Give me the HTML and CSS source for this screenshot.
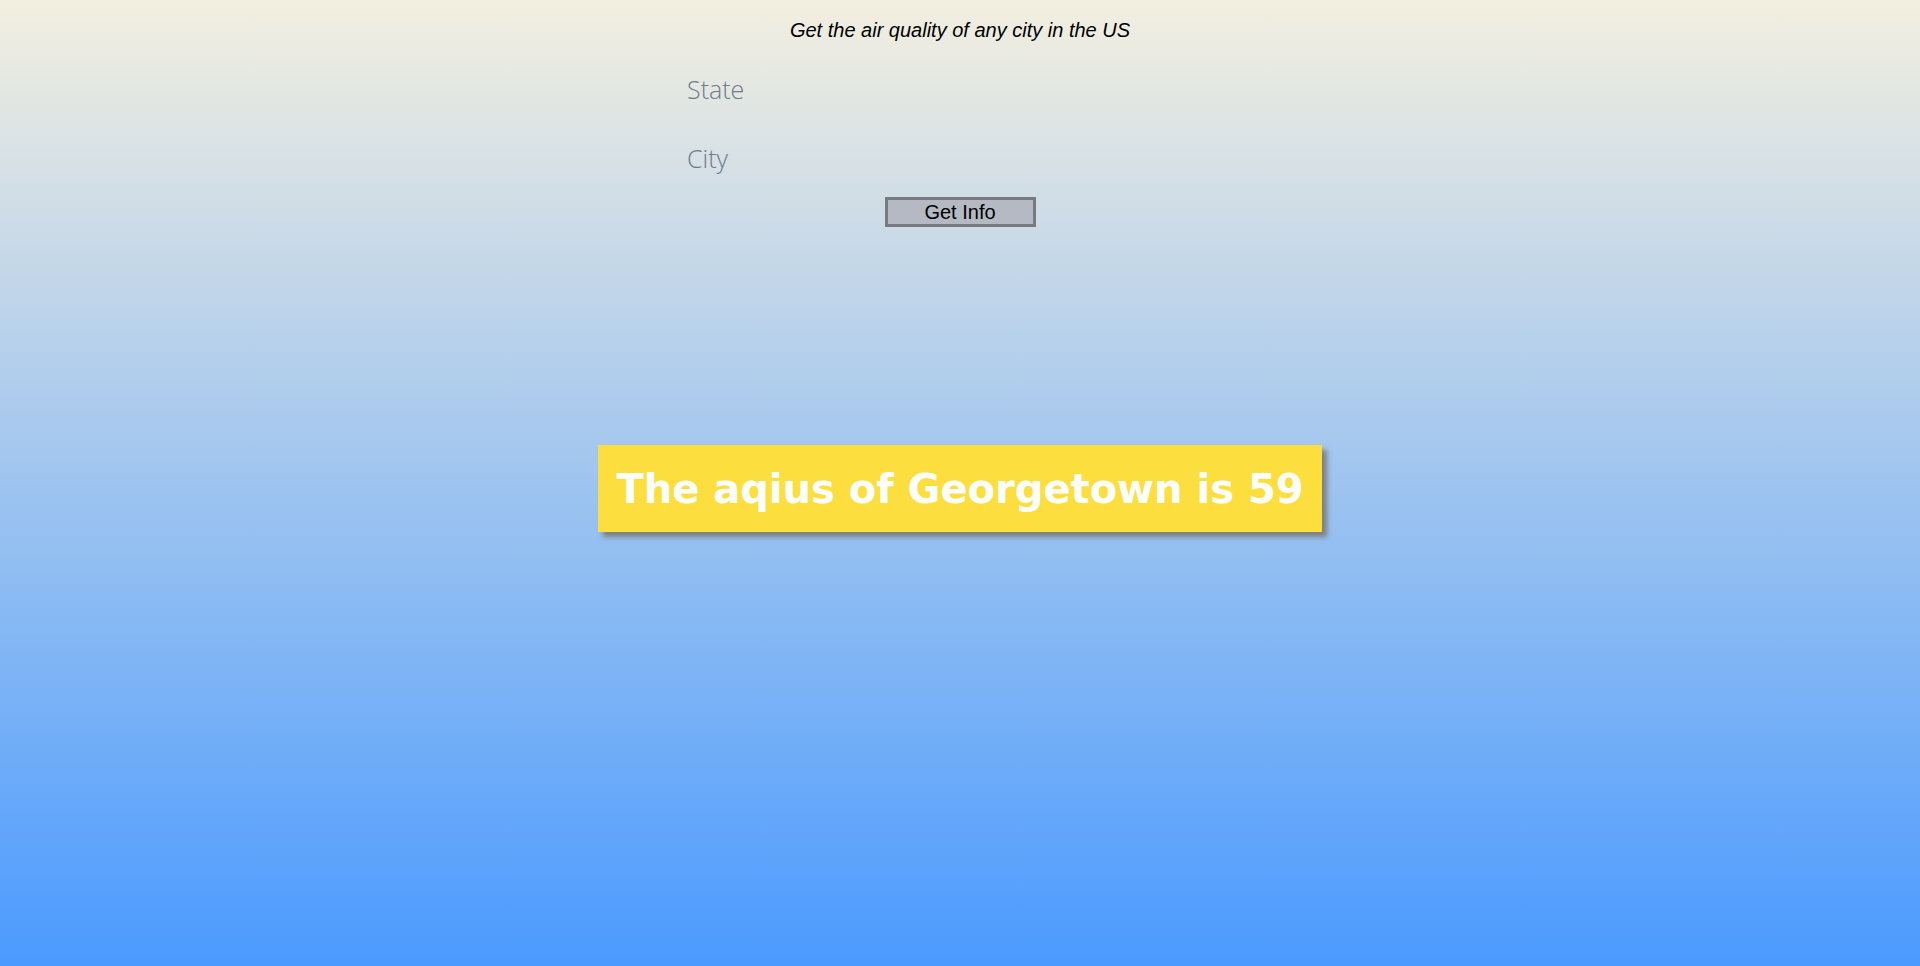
FILE: index.html
```html
<!DOCTYPE html>
<html lang="en">
<head>
<meta charset="utf-8">
<title>Air Quality</title>
<link rel="stylesheet" href="styles.css">
</head>
<body>
<main class="page">
  <p class="subtitle">Get the air quality of any city in the US</p>
  <form class="form">
    <input class="field" type="text" placeholder="State">
    <input class="field" type="text" placeholder="City">
    <button class="btn" type="button">Get Info</button>
  </form>
  <div class="result">The aqius of Georgetown is 59</div>
</main>
</body>
</html>
```
FILE: styles.css
```css
html, body {
  margin: 0;
  padding: 0;
}
body {
  min-height: 966px;
  background: linear-gradient(to bottom, #f3efe0 0%, #4a9aff 100%);
  font-family: "Liberation Sans", Arial, sans-serif;
}
.page {
  display: flex;
  flex-direction: column;
  align-items: center;
  padding-top: 19px;
}
.subtitle {
  margin: 0;
  font-style: italic;
  font-size: 20px;
  line-height: 23px;
  color: #000;
}
.form {
  display: flex;
  flex-direction: column;
  align-items: center;
  margin-top: 30px;
}
.field {
  display: block;
  width: 546px;
  height: 34px;
  box-sizing: border-box;
  padding: 0;
  margin: 0 0 35px 0;
  border: none;
  outline: none;
  background: transparent;
  font-family: "Open Sans", sans-serif;
  font-weight: 300;
  font-size: 25px;
  color: #444;
}
.field:last-of-type {
  margin-bottom: 22px;
}
.field::placeholder {
  color: #6f7b8b;
  opacity: 1;
}
.btn {
  width: 151px;
  height: 30px;
  box-sizing: border-box;
  border: 3px solid #777a7f;
  background: #b4b9c3;
  font-family: "Liberation Sans", Arial, sans-serif;
  font-size: 20px;
  color: #000;
  padding: 0;
  line-height: 24px;
}
.result {
  margin-top: 218px;
  width: 724px;
  height: 87px;
  box-sizing: border-box;
  padding: 0 0 0 0;
  display: flex;
  align-items: center;
  justify-content: center;
  background: #fcdf3f;
  color: #fff;
  font-family: "DejaVu Sans", Verdana, sans-serif;
  font-weight: bold;
  font-size: 40px;
  white-space: nowrap;
  box-shadow: 5px 5px 5px #7f7f7f;
}
```
